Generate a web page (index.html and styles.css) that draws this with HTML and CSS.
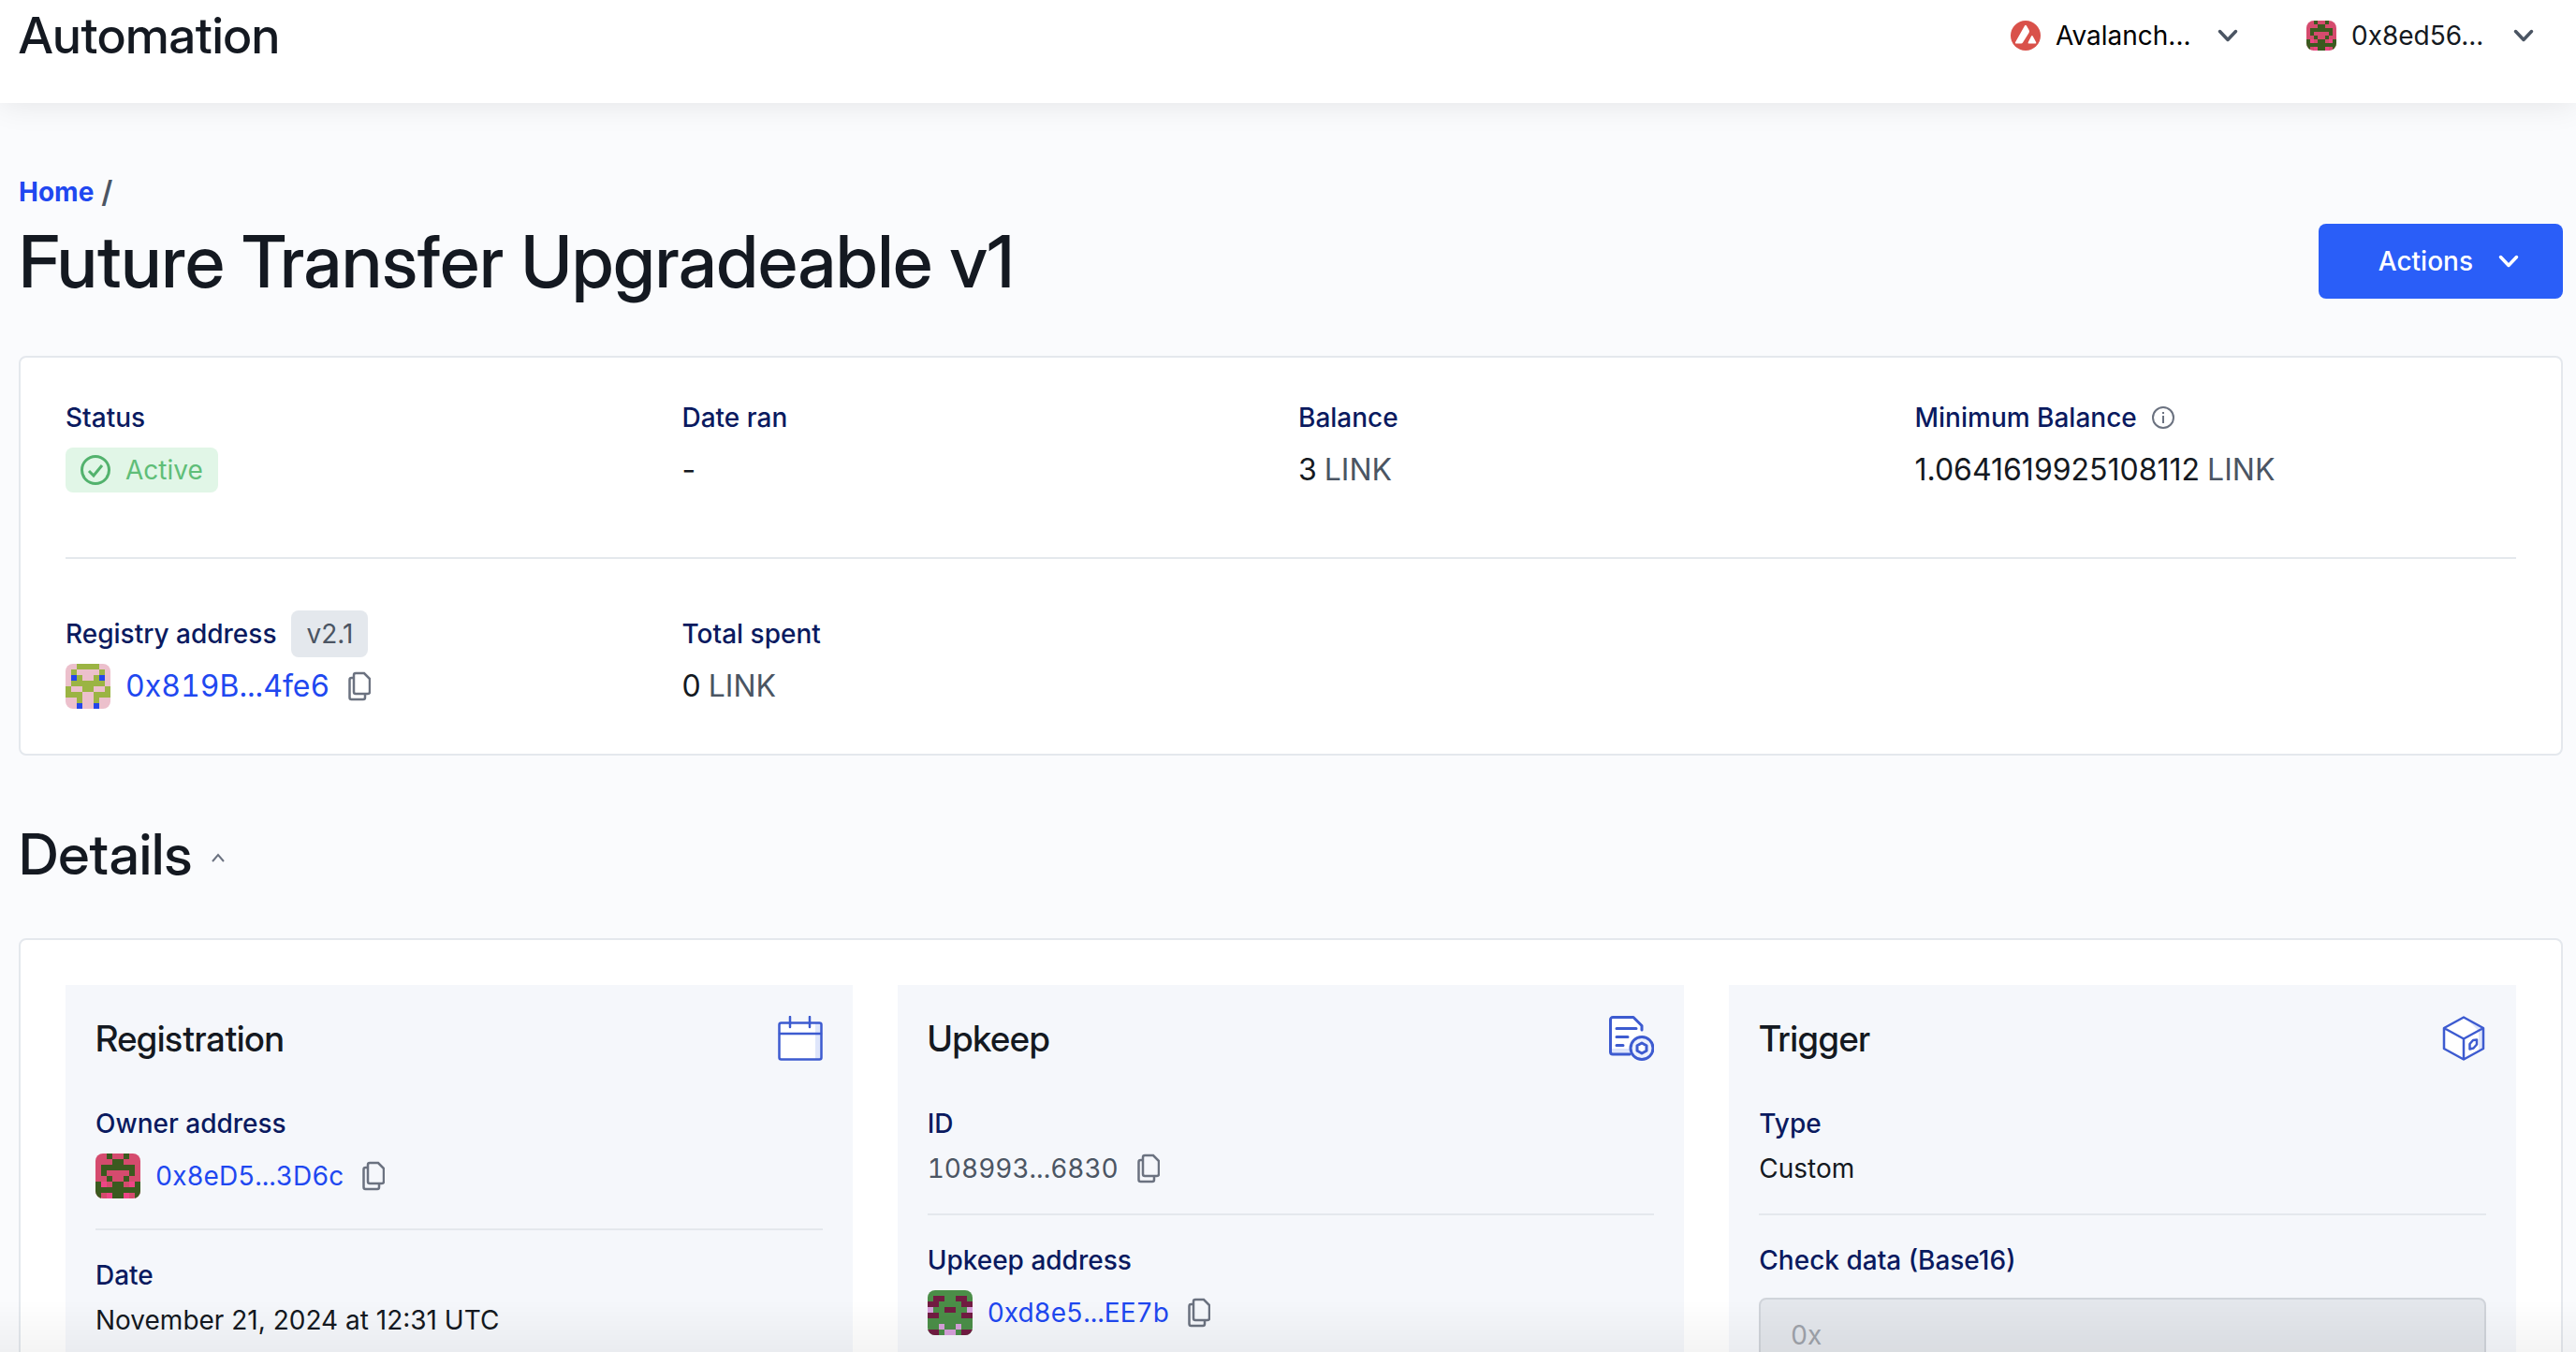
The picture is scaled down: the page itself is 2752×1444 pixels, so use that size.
FILE: index.html
```html
<!DOCTYPE html>
<html lang="en">
<head>
<meta charset="utf-8">
<meta name="viewport" content="width=device-width, initial-scale=1">
<title>Future Transfer Upgradeable v1 | Automation</title>
<link rel="stylesheet" href="styles.css">
</head>
<body>
<svg class="sprite" aria-hidden="true">
  <symbol id="chevron" viewBox="0 0 24 24"><path d="M3.500 7.500l8.500 9 8.500-9" fill="none" stroke="currentColor" stroke-width="3.500" stroke-linecap="round" stroke-linejoin="round"/></symbol>
  <symbol id="copy" viewBox="0 0 24 32"><path d="M8 2h9l6 6v14a2 2 0 0 1-2 2H8a2 2 0 0 1-2-2V4a2 2 0 0 1 2-2z" fill="none" stroke="currentColor" stroke-width="2.500"/><path d="M6 7H3.500a2 2 0 0 0-2 2v19a2 2 0 0 0 2 2H16a2 2 0 0 0 2-2v-4" fill="none" stroke="currentColor" stroke-width="2.500"/></symbol>
  <symbol id="identicon-owner" viewBox="0 0 8 8">
    <path fill="#d54b6e" d="M0 0h8v8H0z"/>
    <path fill="#3b5a1f" d="M2 0h1v1H2zM5 0h1v1H5zM3 1h2v1H3zM1 2h6v1H1zM1 3h1v1H1zM6 3h1v1H6zM2 4h1v1H2zM5 4h1v1H5zM0 5h1v1H0zM3 5h2v1H3zM7 5h1v1H7zM0 6h8v1H0zM0 7h1v1H0zM3 7h2v1H3zM7 7h1v1H7z"/>
    <path fill="#ee4586" d="M1 5h1v1H1zM6 5h1v1H6zM2 7h1v1H2zM5 7h1v1H5z"/>
  </symbol>
  <symbol id="identicon-registry" viewBox="0 0 8 8">
    <path fill="#ecc0cc" d="M0 0h8v8H0z"/>
    <path fill="#9bb443" d="M2 0h4v1H2zM1 1h1v1H1zM6 1h1v1H6zM2 2h1v1H2zM5 2h1v1H5zM1 3h6v1H1zM0 4h1v1H0zM3 4h2v1H3zM7 4h1v1H7zM0 5h3v1H0zM5 5h3v1H5zM2 6h1v1H2zM5 6h1v1H5z"/>
    <path fill="#2446ea" d="M1 2h1v1H1zM6 2h1v1H6zM2 7h1v1H2zM5 7h1v1H5z"/>
  </symbol>
  <symbol id="identicon-upkeep" viewBox="0 0 8 8">
    <path fill="#4b8e48" d="M0 0h8v8H0z"/>
    <path fill="#721c42" d="M1 1h2v1H1zM5 1h2v1H5zM0 2h2v1H0zM6 2h2v1H6zM3 3h2v1H3zM0 4h2v1H0zM6 4h2v1H6zM0 7h2v1H0zM6 7h2v1H6z"/>
    <path fill="#d6a0da" d="M0 3h1v1H0zM7 3h1v1H7zM2 6h1v1H2zM5 6h1v1H5zM3 7h2v1H3z"/>
  </symbol>
</svg>

<header class="topbar">
  <p class="brand">Automation</p>
  <div class="pickers">
    <label class="picker">
      <svg class="picker-icon" viewBox="0 0 32 32" aria-hidden="true"><circle cx="16" cy="16" r="16" fill="#d9514a"/><path fill="#fff" d="M15 5.500q1-1.700 2 0l2.600 4.600q.8 1.500 0 3L13 23.600q-.6 1-1.800 1H6q-1.800 0-.9-1.600zM22 16.800q.9-1.400 1.800 0l3.300 6.100q.9 1.700-.8 1.700h-6.700q-1.700 0-.8-1.700z"/></svg>
      <select class="picker-select" aria-label="Network"><option>Avalanch...</option></select>
      <svg class="chevron"><use href="#chevron"/></svg>
    </label>
    <label class="picker">
      <svg class="picker-icon identicon-small"><use href="#identicon-owner"/></svg>
      <select class="picker-select ink" aria-label="Wallet"><option>0x8ed56...</option></select>
      <svg class="chevron"><use href="#chevron"/></svg>
    </label>
  </div>
</header>

<main class="page">
  <nav class="crumbs" aria-label="Breadcrumb"><a href="#home">Home</a><span>/</span></nav>
  <div class="title-row">
    <h1>Future Transfer Upgradeable v1</h1>
    <button class="actions" type="button">Actions <svg class="chevron"><use href="#chevron"/></svg></button>
  </div>

  <section class="card summary" aria-label="Summary">
    <dl class="grid grid-top">
      <div class="field"><dt>Status</dt><dd><span class="badge badge-active"><svg class="check" viewBox="0 0 32 32" fill="none" stroke="currentColor" stroke-width="3" aria-hidden="true"><circle cx="16" cy="16" r="14.500"/><path d="M9 17l5 5 9-11"/></svg>Active</span></dd></div>
      <div class="field"><dt>Date ran</dt><dd>-</dd></div>
      <div class="field"><dt>Balance</dt><dd>3 <span class="unit">LINK</span></dd></div>
      <div class="field"><dt>Minimum Balance <svg class="info" viewBox="0 0 24 24" aria-hidden="true"><circle cx="12" cy="12" r="11" fill="none" stroke="currentColor" stroke-width="2"/><path d="M12 10v8M12 6v2" stroke="currentColor" stroke-width="2"/></svg></dt><dd>1.0641619925108112 <span class="unit">LINK</span></dd></div>
    </dl>
    <dl class="grid grid-bottom">
      <div class="field"><dt>Registry address <span class="badge badge-version">v2.1</span></dt><dd><svg class="identicon"><use href="#identicon-registry"/></svg><a class="hash" href="#registry">0x819B...4fe6</a><button class="copy" type="button" aria-label="Copy registry address"><svg><use href="#copy"/></svg></button></dd></div>
      <div class="field"><dt>Total spent</dt><dd>0 <span class="unit">LINK</span></dd></div>
    </dl>
  </section>

  <h2 class="section-title">Details <button class="toggle" type="button" aria-label="Collapse details" aria-expanded="true"><svg viewBox="0 0 16 10"><path d="M2 9l6-7 6 7" fill="none" stroke="currentColor" stroke-width="2"/></svg></button></h2>

  <div class="card panels">
    <section class="panel">
      <header class="panel-head"><h3>Registration</h3>
        <svg class="panel-icon" viewBox="0 0 48 48" aria-hidden="true"><rect x="1.500" y="7.500" width="45" height="39" rx="2" fill="#fff"/><path d="M40 8h6v38h-6z" fill="#dfe6fb"/><g fill="none" stroke="#3d5bd0" stroke-width="2.500" stroke-linecap="round"><rect x="1.500" y="7.500" width="45" height="39" rx="2"/><path d="M2 19h44M13 1v11M34 1v11"/></g></svg>
      </header>
      <dl class="facts">
        <div class="fact"><dt>Owner address</dt><dd><svg class="identicon"><use href="#identicon-owner"/></svg><a class="hash" href="#owner">0x8eD5...3D6c</a><button class="copy" type="button" aria-label="Copy owner address"><svg><use href="#copy"/></svg></button></dd></div>
        <div class="fact"><dt>Date</dt><dd>November 21, 2024 at 12:31 UTC</dd></div>
      </dl>
    </section>
    <section class="panel">
      <header class="panel-head"><h3>Upkeep</h3>
        <svg class="panel-icon" viewBox="0 0 48 48" aria-hidden="true"><path d="M4 1.500h22l9 9V41H4a2.500 2.500 0 0 1-2.500-2.500V4A2.500 2.500 0 0 1 4 1.500z" fill="#fff"/><path d="M2 35h20v6H2z" fill="#dfe6fb"/><g fill="none" stroke="#3d5bd0" stroke-width="3" stroke-linecap="round" stroke-linejoin="round"><path d="M22 41H4a2.500 2.500 0 0 1-2.500-2.500V4A2.500 2.500 0 0 1 4 1.500h22l9 9V15M8 13.500h21M8 22.500h12M8 31.500h7"/><circle cx="35" cy="34.500" r="12" fill="#edf1fd"/><path d="M35 29l5 2.700v5.600l-5 2.700-5-2.700v-5.600z" fill="#fff"/></g></svg>
      </header>
      <dl class="facts">
        <div class="fact"><dt>ID</dt><dd><span class="muted hash">108993...6830</span><button class="copy" type="button" aria-label="Copy ID"><svg><use href="#copy"/></svg></button></dd></div>
        <div class="fact"><dt>Upkeep address</dt><dd><svg class="identicon"><use href="#identicon-upkeep"/></svg><a class="hash" href="#upkeep">0xd8e5...EE7b</a><button class="copy" type="button" aria-label="Copy upkeep address"><svg><use href="#copy"/></svg></button></dd></div>
      </dl>
    </section>
    <section class="panel">
      <header class="panel-head"><h3>Trigger</h3>
        <svg class="panel-icon" viewBox="0 0 48 48" aria-hidden="true"><path d="M24 1.500l21 11.500v22L24 46.500 3 35V13z" fill="#fff"/><path d="M28 4l17 9v22l-5 3V16z" fill="#dfe6fb"/><g fill="none" stroke="#3d5bd0" stroke-width="2.500" stroke-linejoin="round"><path d="M24 1.500l21 11.500v22L24 46.500 3 35V13zM3 13l21 11.500L45 13M24 24.500v22"/><path d="M30.500 30l3.500-4 4-.5v5l-3.500 4-4 1z"/></g></svg>
      </header>
      <dl class="facts">
        <div class="fact"><dt>Type</dt><dd>Custom</dd></div>
        <div class="fact fact-input"><dt><label for="check-data">Check data (Base16)</label></dt><dd><input id="check-data" class="data-input" type="text" value="0x" disabled></dd></div>
      </dl>
    </section>
  </div>
</main>
</body>
</html>
```
FILE: styles.css
```css
* { box-sizing: border-box; }

html, body { height: 100%; }

body {
  margin: 0;
  overflow: hidden;
  background: #fafbfd;
  color: #141921;
  font-family: Inter, "Liberation Sans", sans-serif;
  font-size: 28px;
  line-height: 32px;
}

/* soft shade along the bottom edge of the window */
body::after {
  content: "";
  position: fixed;
  inset: auto 0 0;
  height: 56px;
  background: linear-gradient(rgba(0, 0, 0, 0), rgba(0, 0, 0, .045));
  pointer-events: none;
}

h1, h2, h3, p, dl, dd { margin: 0; }
h1, h2, h3, .brand {
  font-family: "Inter Display", Inter, "Liberation Sans", sans-serif;
  font-weight: 500;
}
svg { flex: none; }
button, select, input { font: inherit; }
a { color: #1f48f0; text-decoration: none; }

.sprite { position: absolute; width: 0; height: 0; }

.topbar {
  display: flex;
  justify-content: space-between;
  align-items: center;
  height: 110px;
  padding: 0 14px 34px 20px;
  background: #fff;
  box-shadow: 0 0 32px rgba(0, 0, 0, .1);
}
.brand { font-size: 54px; line-height: 76px; }
.pickers { display: flex; gap: 42px; }
.picker { display: flex; align-items: center; gap: 16px; width: 274px; padding-right: 30px; }
.picker-icon { width: 32px; height: 32px; }
.identicon-small { border-radius: 8px; }
.picker-select {
  appearance: none;
  flex: 1;
  min-width: 0;
  padding: 0;
  border: 0;
  background: none;
  color: #000;
  line-height: 40px;
}
.picker-select.ink { color: #141921; }
.chevron { width: 24px; height: 24px; color: #4b5563; }

.page { padding: 79px 14px 0 20px; }
.crumbs { display: flex; gap: 8px; margin-bottom: 4px; font-weight: 700; }
.crumbs span { color: #4b5563; font-size: 32px; font-weight: 600; }
.title-row { display: flex; justify-content: space-between; align-items: center; margin-bottom: 47px; }
h1 { font-size: 77px; line-height: 108px; }
.actions {
  display: flex;
  align-items: center;
  gap: 26px;
  height: 80px;
  padding: 0 46px 0 64px;
  border: 0;
  border-radius: 8px;
  background: #2a5ef8;
  color: #fff;
  font-weight: 500;
}
.actions .chevron { color: inherit; }

.card { padding: 48px; border: 2px solid #e4e8ed; border-radius: 8px; background: #fff; }
.grid { display: grid; grid-template-columns: repeat(4, 1fr); gap: 16px; }
.grid-top { padding-bottom: 69px; border-bottom: 2px solid #e4e8ed; }
.grid-bottom { padding-top: 55px; }
dt { display: flex; align-items: center; gap: 16px; color: #0a1a5f; font-weight: 500; }
dd { display: flex; align-items: center; gap: 8px; }
.field dd { height: 48px; font-size: 32px; }
.field dt { height: 32px; margin-bottom: 16px; }
.grid-bottom dt { height: 50px; margin-bottom: 7px; }
.unit, .muted { color: #4b5563; }
.hash { font-variant-numeric: tabular-nums; }
.badge { display: flex; align-items: center; gap: 16px; padding: 0 16px; border-radius: 8px; font-size: 28px; font-weight: 400; }
.badge-active { height: 48px; background: #e1f6e7; color: #5fbe78; }
.badge-version { height: 50px; background: #e4e8ed; color: #4b5563; }
.check { width: 32px; height: 32px; color: #52b26d; }
.info { width: 24px; height: 24px; color: #6b7280; }
.identicon { width: 48px; height: 48px; margin-right: 8px; border-radius: 8px; shape-rendering: crispEdges; }
.copy { display: flex; margin-left: 12px; padding: 0; border: 0; background: none; color: #6b7280; }
.copy svg { width: 24px; height: 32px; }

.section-title { display: flex; align-items: center; gap: 20px; padding: 64px 0 49px; font-size: 61px; line-height: 82px; }
.toggle { display: flex; padding: 8px 0 0; border: 0; background: none; color: #6b7280; }
.toggle svg { width: 16px; height: 10px; }

.panels { display: grid; grid-template-columns: repeat(3, 1fr); gap: 48px; }
.panel { padding: 32px; background: #f5f7fb; }
.panel-head { display: flex; justify-content: space-between; align-items: center; margin-bottom: 50px; }
.panel-icon { width: 48px; height: 48px; }
h3 { font-size: 38px; line-height: 50px; }
.fact dt { margin-bottom: 16px; }
.fact + .fact { margin-top: 32px; padding-top: 32px; border-top: 2px solid #e4e8ed; }
.fact dd .copy { height: 32px; }
.fact.fact-input dt { margin-bottom: 24px; }
.data-input {
  width: 100%;
  height: 80px;
  padding: 0 32px;
  border: 2px solid #d0d4da;
  border-radius: 8px;
  background: #e4e7ec;
  color: #9fa3ab;
}
```
